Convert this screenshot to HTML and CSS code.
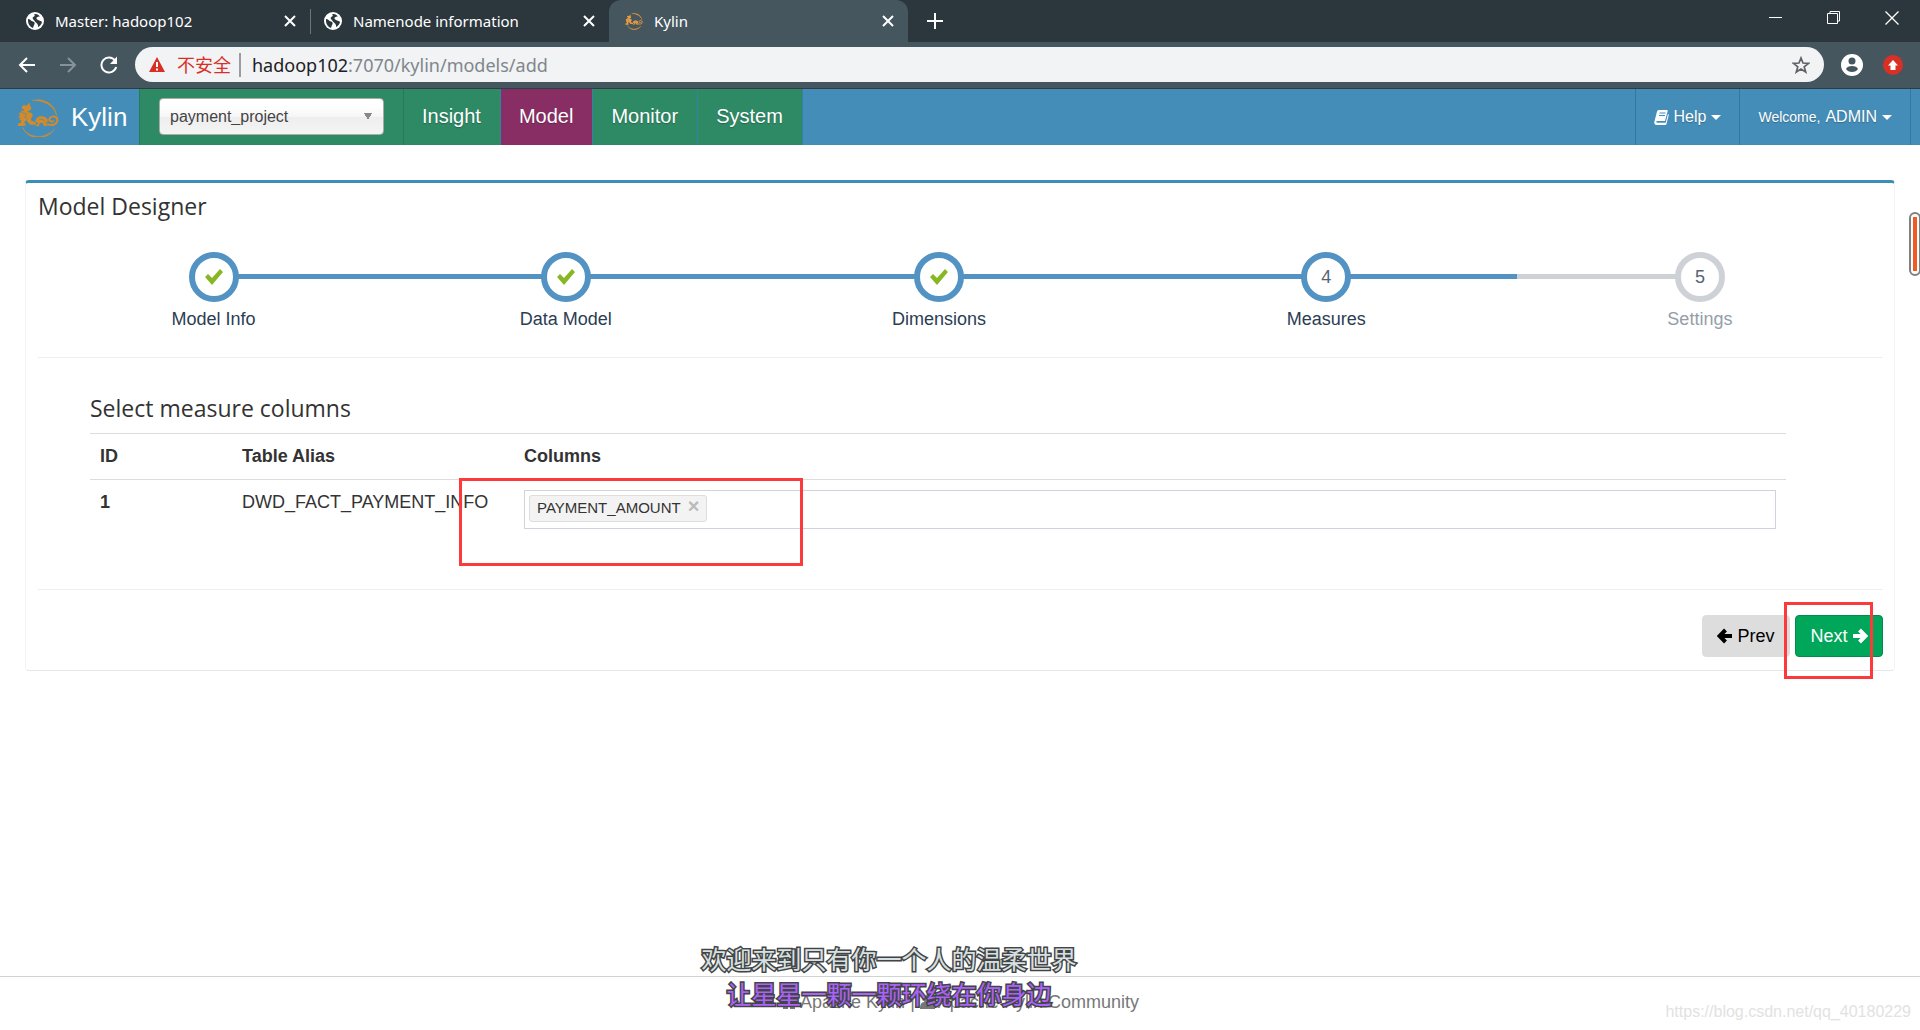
FILE: index.html
```html
<!DOCTYPE html>
<html lang="en">
<head>
<meta charset="utf-8">
<title>Kylin</title>
<link rel="stylesheet" href="styles.css">
</head>
<body>
<svg class="sprite" aria-hidden="true">
  <symbol id="globe" viewBox="0 0 18 18">
    <circle cx="9" cy="9" r="9" fill="#fff"/>
    <path d="M2 7c2 0 3 2 5 2.500 2 .5 2 2 1 3.500l-1 3C4 15 2 12 2 9zM8 2c3-.5 5 1 6 2.500-2 0-3 .5-3.500 1.500S12 8 13 8.500s2.500.5 3 1.500c-.5 2.500-2 4-4 5 .5-2-.5-3-1.500-4S8 8.500 7 7s0-2 1-2.500S9 3 8 2z" fill="#2c373d"/>
  </symbol>
  <symbol id="cross" viewBox="0 0 12 12">
    <path d="M1 1l10 10M11 1L1 11" fill="none" stroke="currentColor" stroke-width="2"/>
  </symbol>
  <symbol id="qilin" viewBox="51 50 128 118">
    <path d="M98 57C133 47 168 70 172 103C163 72 134 56 98 57zM68 139C83 171 134 178 165 145C139 184 82 177 68 139z" stroke="currentColor" stroke-width="1.500"/>
    <path d="M65 76l7-5 8 2 10-10 1 10 4 7-3 7-9 2 4 4 10 3 2 8-5 8 0 6 8 3 7 4v6H92l-7-6-4-7-6 2-1 6 5 6-7 3H53l2-8 8-3 1-8-6 2 3-9-7-1 6-7-4-6 8-1 1-7 6 2 2-5-6-1z"/>
    <path d="M107 118c3-10 13-15 25-12 9 2 14 8 13 15l-5 4 1 6 4 4h-12l-4-10-7 1-4 5 2 5h-15l8-6 1-7-7 1z"/>
    <path d="M142 128c14 8 33 2 32-12-1-12-19-14-24-4-3 8 8 13 13 6" fill="none" stroke="currentColor" stroke-width="6"/>
    <path d="M66 94l14 4-6 9 9 7" fill="none" stroke="#448db8" stroke-width="2"/>
    <path d="M119 115q9-3 15 3" fill="none" stroke="#448db8" stroke-width="2"/>
  </symbol>
  <symbol id="check" viewBox="0 0 18 16">
    <path d="M0 8l3-3 4 4 8-9 3 3L7 16z" fill="#87b823"/>
  </symbol>
  <symbol id="arrow" viewBox="0 0 16 16">
    <path d="M1 8h12M7.500 2L13.500 8l-6 6" fill="none" stroke="currentColor" stroke-width="4"/>
  </symbol>
</svg>

<div class="window">
  <header class="browser">
    <div class="tabstrip">
      <div class="tab">
        <svg class="favicon"><use href="#globe"/></svg>
        <span class="tab-title">Master: hadoop102</span>
        <button class="bare" aria-label="Close Master"><svg class="close"><use href="#cross"/></svg></button>
      </div>
      <div class="tab divided">
        <svg class="favicon"><use href="#globe"/></svg>
        <span class="tab-title">Namenode information</span>
        <button class="bare" aria-label="Close Namenode"><svg class="close"><use href="#cross"/></svg></button>
      </div>
      <div class="tab current">
        <svg class="favicon orange"><use href="#qilin"/></svg>
        <span class="tab-title">Kylin</span>
        <button class="bare" aria-label="Close Kylin"><svg class="close"><use href="#cross"/></svg></button>
      </div>
      <button class="bare new-tab" aria-label="New tab"><svg width="16" height="16" viewBox="0 0 16 16"><path d="M8 0v16M0 8h16" stroke="#fff" stroke-width="2"/></svg></button>
      <div class="window-buttons">
        <button class="bare" aria-label="Minimize"><svg width="14" height="14" viewBox="0 0 14 14"><path d="M0 6.500h13" stroke="#fff"/></svg></button>
        <button class="bare" aria-label="Restore"><svg width="14" height="14" viewBox="0 0 14 14"><path d="M.5 2.500h10v10H.5zM3 2V.5h9.500v9.500H11" fill="none" stroke="#fff"/></svg></button>
        <button class="bare" aria-label="Close window"><svg width="14" height="14" viewBox="0 0 14 14"><path d="M.5.5l13 13M13.500.5l-13 13" stroke="#fff" stroke-width="1.300"/></svg></button>
      </div>
    </div>
    <div class="toolbar">
      <div class="history">
        <button class="bare" aria-label="Back"><svg width="18" height="18" viewBox="0 0 18 18"><path d="M17 9H2M9 2L2 9l7 7" fill="none" stroke="#fff" stroke-width="2"/></svg></button>
        <button class="bare" aria-label="Forward"><svg width="18" height="18" viewBox="0 0 18 18"><path d="M1 9h15M9 2l7 7-7 7" fill="none" stroke="#87939a" stroke-width="2"/></svg></button>
        <button class="bare" aria-label="Reload"><svg width="18" height="18" viewBox="0 0 18 18"><path d="M15 4.500A7.500 7.500 0 1 0 16.200 11" fill="none" stroke="#fff" stroke-width="2"/><path d="M17 .5v7.500h-7z" fill="#fff"/></svg></button>
      </div>
      <div class="address">
        <svg width="16" height="15" viewBox="0 0 16 15"><path d="M8 0l8 15H0z" fill="#d93025"/><path d="M8 5v5M8 11.500v2" stroke="#fff" stroke-width="2"/></svg>
        <span class="insecure">不安全</span>
        <span class="url">hadoop102<span class="path">:7070/kylin/models/add</span></span>
        <button class="bare" aria-label="Bookmark"><svg width="18" height="18" viewBox="0 0 18 18"><path d="M9 2l2 5 5.500.3-4.300 3.500 1.500 5.200L9 13l-4.700 3 1.500-5.200L1.500 7.300 7 7z" fill="none" stroke="#5f6368" stroke-width="1.700"/></svg></button>
      </div>
      <div class="extras">
        <button class="bare" aria-label="Profile"><svg width="22" height="22" viewBox="0 0 22 22"><circle cx="11" cy="11" r="11" fill="#fff"/><circle cx="11" cy="7" r="3.500" fill="#45565f"/><path d="M5 15c1-4 11-4 12 0-2 4-10 4-12 0z" fill="#45565f"/></svg></button>
        <button class="bare" aria-label="Update"><svg width="20" height="20" viewBox="0 0 20 20"><circle cx="10" cy="10" r="10" fill="#d93025"/><path d="M10 5l5 5.500h-2.500V15h-5v-4.500H5z" fill="#fff"/></svg></button>
      </div>
    </div>
  </header>

  <nav class="navbar">
    <a class="brand" href="#"><svg class="logo"><use href="#qilin"/></svg>Kylin</a>
    <div class="project">
      <select class="project-select" aria-label="Project"><option>payment_project</option></select>
    </div>
    <a class="nav-link" href="#">Insight</a>
    <a class="nav-link active" href="#">Model</a>
    <a class="nav-link" href="#">Monitor</a>
    <a class="nav-link" href="#">System</a>
    <div class="account">
      <a class="menu" href="#"><svg width="15" height="15" viewBox="0 0 15 15"><path d="M4.500 0H13q1 0 .7 1L11 11H2.500q-1 1.500 1 1.800h8.200L14 4q1 0 .7 1.200L12.500 14q-.3 1-1.300 1H2.500Q0 14.500.3 12L3 1.500Q3.500 0 4.500 0z" fill="#fff"/><path d="M5.500 3h6M5 5.500h6" stroke="#448db8"/></svg>Help<i class="caret"></i></a>
      <a class="menu" href="#"><small>Welcome,</small>ADMIN<i class="caret"></i></a>
    </div>
  </nav>

  <main class="page">
    <section class="box">
      <h1 class="heading">Model Designer</h1>
      <ol class="steps">
        <li class="step done"><span class="bullet"><svg class="tick" role="img" aria-label="Done"><use href="#check"/></svg></span>Model Info</li>
        <li class="step done"><span class="bullet"><svg class="tick" role="img" aria-label="Done"><use href="#check"/></svg></span>Data Model</li>
        <li class="step done"><span class="bullet"><svg class="tick" role="img" aria-label="Done"><use href="#check"/></svg></span>Dimensions</li>
        <li class="step done"><span class="bullet">4</span>Measures</li>
        <li class="step"><span class="bullet">5</span>Settings</li>
      </ol>
      <div class="measures">
        <h2 class="heading">Select measure columns</h2>
        <table class="columns">
          <thead>
            <tr><th class="col-id">ID</th><th class="col-alias">Table Alias</th><th>Columns</th></tr>
          </thead>
          <tbody>
            <tr>
              <th scope="row">1</th>
              <td>DWD_FACT_PAYMENT_INFO</td>
              <td class="picker-cell">
                <div class="picker">
                  <span class="tag">PAYMENT_AMOUNT<button class="bare remove" aria-label="Remove PAYMENT_AMOUNT">×</button></span>
                  <input class="picker-input" type="text" aria-label="Columns">
                </div>
                <div class="mark mark-columns"></div>
              </td>
            </tr>
          </tbody>
        </table>
      </div>
      <div class="actions">
        <button class="btn prev"><svg class="arrow back"><use href="#arrow"/></svg>Prev</button>
        <button class="btn next">Next<svg class="arrow"><use href="#arrow"/></svg></button>
        <div class="mark mark-next"></div>
      </div>
    </section>
  </main>

  <footer class="footer">
    <a class="foot-link" href="#"><svg width="16" height="14" viewBox="0 0 16 14"><path d="M0 7l8-7 8 7h-2v7H9V9H7v5H2V7z" fill="currentColor"/></svg>Apache Kylin</a>
    <span>|</span>
    <a class="foot-link" href="#"><svg width="15" height="14" viewBox="0 0 15 14"><circle cx="7.500" cy="4" r="4" fill="currentColor"/><path d="M0 14q0-7 4-7h7q4 0 4 7z" fill="currentColor"/></svg>Apache Kylin Community</a>
    <div class="lyrics">
      <p class="lyric">欢迎来到只有你一个人的温柔世界</p>
      <p class="lyric purple">让星星一颗一颗环绕在你身边</p>
    </div>
    <span class="watermark">https://blog.csdn.net/qq_40180229</span>
  </footer>
  <div class="side-handle"></div>
</div>
</body>
</html>
```
FILE: styles.css
```css
* { box-sizing: border-box; }

body {
  margin: 0;
  background: #fff;
  color: #333;
  font: 18px/24px "Liberation Sans", "Noto Sans CJK SC", sans-serif;
}

a { color: inherit; text-decoration: none; }
svg { display: block; flex: none; }
.sprite { position: absolute; width: 0; height: 0; }

.bare {
  display: flex;
  padding: 0;
  border: 0;
  background: none;
  color: inherit;
  font: inherit;
}

.window {
  position: relative;
  display: flex;
  flex-direction: column;
  min-height: 100vh;
  overflow: hidden;
}

/* Browser chrome */
.browser {
  background: #45565f;
  color: #fff;
  font-family: "Noto Sans", "Noto Sans CJK SC", sans-serif;
}

.tabstrip { display: flex; height: 42px; background: #2c373d; }

.tab {
  display: flex;
  align-items: center;
  width: 299px;
  padding: 0 14px;
  gap: 11px;
  font-size: 15px;
}
.tab:first-child { width: 310px; padding-left: 26px; }
.tab.current { padding-left: 16px; background: #45565f; border-radius: 12px 12px 0 0; }
.divided { background: linear-gradient(#6b757a, #6b757a) 0 9px / 1px 25px no-repeat; }
.tab-title { flex: 1; white-space: nowrap; }
.favicon { width: 18px; height: 18px; }
.orange { color: #eb9b3c; fill: #eb9b3c; }
.close { width: 12px; height: 12px; }
.new-tab { align-items: center; margin-left: 19px; }

.window-buttons {
  display: flex;
  align-items: center;
  gap: 44px;
  margin-left: auto;
  padding: 0 21px 6px 0;
}

.toolbar {
  display: flex;
  align-items: center;
  gap: 17px;
  height: 47px;
  padding: 0 17px 1px 18px;
  border-bottom: 1px solid #2e3c44;
}
.history { display: flex; gap: 23px; }
.extras { display: flex; align-items: center; gap: 20px; }
.address {
  display: flex;
  flex: 1;
  align-items: center;
  height: 35px;
  padding: 0 14px;
  border-radius: 18px;
  background: #f1f3f5;
}
.insecure { margin: 0 8px 0 12px; color: #d93025; }
.url { flex: 1; padding-left: 11px; border-left: 2px solid #9a9c9f; color: #202124; }
.path { color: #80868b; }

/* Navigation */
.navbar {
  display: flex;
  height: 56px;
  background: #448db8;
  color: #fff;
  font-size: 20px;
  text-shadow: 0 1px 1px rgba(0, 0, 0, .25);
}
.brand {
  display: flex;
  align-items: center;
  width: 139px;
  padding-left: 17px;
  gap: 12px;
  font-size: 26px;
  text-shadow: none;
}
.logo { width: 42px; height: 39px; color: #d38a2a; fill: #d38a2a; }
.project {
  width: 265px;
  padding: 9px 19px;
  border: solid #2b7759;
  border-width: 0 1px;
  background: #2e8965;
}
.project-select {
  width: 100%;
  height: 37px;
  padding: 0 10px;
  border: 1px solid #aaa;
  border-radius: 4px;
  appearance: none;
  background:
    linear-gradient(to bottom right, #888 50%, transparent 51%) right 11px center / 4px 7px no-repeat,
    linear-gradient(to bottom left, #888 50%, transparent 51%) right 15px center / 4px 7px no-repeat,
    linear-gradient(#fff 20%, #f6f6f6 50%, #eee 52%, #f4f4f4);
  color: #444;
  font: 16px "Liberation Sans", sans-serif;
}
.nav-link {
  display: flex;
  align-items: center;
  padding: 0 19px 2px 18px;
  border-right: 1px solid #367fa9;
  background: #2e8965;
}
.nav-link.active { background: #892e65; }
.account { display: flex; margin-left: auto; padding-right: 9px; font-size: 16px; }
.menu {
  display: flex;
  align-items: center;
  gap: 5px;
  padding: 0 18px;
  border-left: 1px solid #36779e;
}
.menu:last-child { border-right: 1px solid #36779e; }
.menu small { font-size: 14px; }
.caret { border: 5px solid transparent; border-top-color: #fff; border-bottom: 0; }

/* Model designer */
.page { flex: 1; padding: 35px 25px; }
.box {
  padding: 7px 11px 13px 12px;
  border: 1px solid #f3f3f3;
  border-top: 3px solid #3c8dbc;
  border-bottom-color: #e6e6e6;
  border-radius: 4px;
}
.heading {
  margin: 0;
  font: 23px/32px "Open Sans", sans-serif;
  color: #333;
}
.steps {
  display: grid;
  grid-template-columns: 351fr 353fr 393fr 381fr 366fr;
  margin: 0;
  padding: 30px 0 26px;
  border-bottom: 1px solid #eee;
  list-style: none;
}
.step {
  display: flex;
  flex-direction: column;
  align-items: center;
  gap: 5px;
  background: linear-gradient(#ced1d6, #ced1d6) 0 22px / 50% 5px no-repeat;
  color: #949ea7;
}
.step.done { background: linear-gradient(#5293c4, #5293c4) 0 22px / 100% 5px no-repeat; color: #2b3d53; }
.step.done:first-child { background-position-x: 100%; background-size: 50% 5px; }
.bullet {
  display: grid;
  place-items: center;
  width: 50px;
  height: 50px;
  border: 6px solid #ced1d6;
  border-radius: 50%;
  background: #fff;
  color: #546474;
}
.done .bullet { border-color: #5293c4; }
.tick { width: 18px; height: 16px; }

.measures { padding: 34px 97px 50px 52px; border-bottom: 1px solid #eee; }
.columns {
  width: 100%;
  margin-top: 9px;
  border-collapse: collapse;
  table-layout: fixed;
}
.columns th, .columns td {
  padding: 10px;
  border-top: 1px solid #ddd;
  text-align: left;
  vertical-align: top;
  white-space: nowrap;
}
.columns thead th { height: 46px; }
.col-id { width: 142px; }
.col-alias { width: 282px; }
.columns .picker-cell { position: relative; }
.picker {
  display: flex;
  align-items: center;
  height: 39px;
  padding: 0 4px 2px;
  border: 1px solid #d0d3dc;
}
.tag {
  display: flex;
  flex: none;
  height: 27px;
  padding: 0 7px;
  gap: 7px;
  border: 1px solid #ddd;
  border-radius: 3px;
  background: #f3f3f3;
  font-size: 15px;
}
.remove { color: #bbb; font-size: 20px; line-height: 20px; font-weight: bold; }
.picker-input { flex: 1; min-width: 0; border: 0; outline: 0; background: none; }

.actions {
  position: relative;
  display: flex;
  justify-content: flex-end;
  gap: 5px;
  padding-top: 25px;
}
.btn {
  display: flex;
  align-items: center;
  justify-content: center;
  gap: 4px;
  width: 88px;
  height: 42px;
  padding: 0;
  border: 1px solid #ddd;
  border-radius: 4px;
  background: #ddd;
  color: #000;
  font: 18px "Liberation Sans", sans-serif;
}
.next { border-color: #008d4c; background: #00a65a; color: #fff; }
.arrow { width: 16px; height: 16px; }
.back { transform: rotate(180deg); }

/* Red markers lying over the page */
.mark { position: absolute; border: 3px solid #fb3b3b; }
.mark-columns { left: -55px; top: -2px; width: 344px; height: 88px; }
.mark-next { right: 10px; top: 12px; width: 89px; height: 77px; }

.footer {
  position: relative;
  display: flex;
  justify-content: center;
  gap: 5px;
  height: 54px;
  padding-top: 13px;
  border-top: 1px solid #d2d2d2;
  color: #777;
}
.foot-link { display: flex; align-items: center; gap: 3px; height: 24px; }
.lyrics {
  position: absolute;
  left: 46.3%;
  bottom: 19px;
  translate: -50%;
  text-align: center;
  white-space: nowrap;
}
.lyric {
  margin: 0;
  font: 25px/35px "Noto Sans CJK SC", sans-serif;
  color: #d5e0e3;
  -webkit-text-stroke: 3px #444;
  paint-order: stroke fill;
}
.lyric.purple { color: #a962fa; }
.watermark {
  position: absolute;
  right: 9px;
  bottom: 6px;
  color: #e2e2e2;
  font-size: 16px;
}
.side-handle {
  position: absolute;
  right: -1px;
  top: 212px;
  width: 12px;
  height: 64px;
  border: 2px solid #808080;
  border-radius: 6px;
  background: linear-gradient(#f15a24, #f15a24) center / 4px 54px no-repeat #fff;
}
```
